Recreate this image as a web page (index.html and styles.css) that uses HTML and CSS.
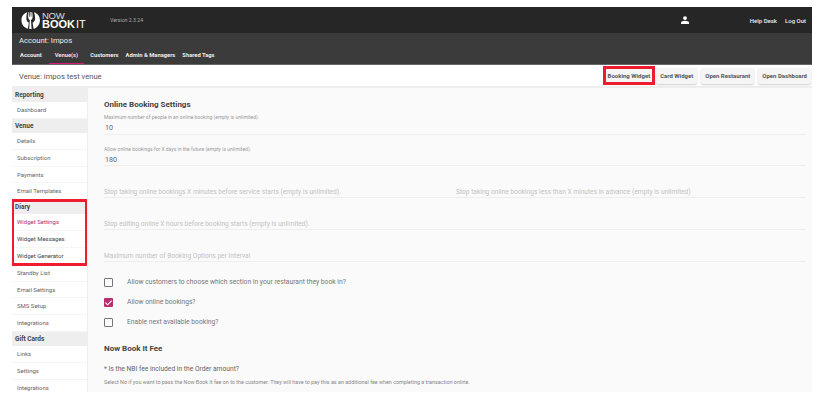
FILE: index.html
```html
<!DOCTYPE html>
<html lang="en">
<head>
<meta charset="utf-8">
<title>Now Book It</title>
<link rel="stylesheet" href="styles.css">
</head>
<body>
<div class="app">
  <header class="topbar">
    <div class="logo">
      <svg class="logo-mark" viewBox="0 0 26 24" width="20" height="19">
        <path fill="#fff" d="M8 1.200C3.400 2.600.6 6.600.6 11.600c0 5.400 3.400 9.700 8.400 11L10.200 15C8.200 14 7 12.200 7 9.500 7 6.500 7.400 3.500 8 1.200Z"/>
        <path fill="#fff" d="M17 1.200c.8 2.400 1.300 5.300 1.300 8.300 0 2.700-1.200 4.500-3.200 5.500l1.200 7.800c4.900-1.300 8.300-5.700 8.300-11.200C24.600 6.600 21.600 2.600 17 1.200Z"/>
        <path fill="#fff" d="M9.600 1h.9l.2 6h.7l.2-6.200h.9l.2 6.200h.7l.2-6h.9c.5 2.400.7 4.600.6 6.600-.1 2-1 3.400-2.100 4l.8 11.300h-3.100l.7-11.300c-1.100-.6-2-2-2.100-4-.1-2 .1-4.200.5-6.600Z"/>
      </svg>
      <div class="logo-text"><span class="logo-now">NOW</span><span class="logo-book">BOOK<span class="logo-it">IT</span></span></div>
    </div>
    <span class="version">Version 2.3.24</span>
    <svg class="user-icon" viewBox="0 0 10 10" width="8" height="8">
      <circle cx="5" cy="2.600" r="2.400" fill="#fff"/>
      <path fill="#fff" d="M0 10V8.200C0 6.700 2.500 5.800 5 5.800s5 .9 5 2.400V10Z"/>
    </svg>
    <a class="top-link">Help Desk</a>
    <a class="top-link">Log Out</a>
  </header>

  <section class="accountbar">
    <div class="account-name">Account: Impos</div>
    <nav class="tabs">
      <a class="tab">Account</a>
      <a class="tab tab-active">Venue(s)</a>
      <a class="tab">Customers</a>
      <a class="tab">Admin &amp; Managers</a>
      <a class="tab">Shared Tags</a>
    </nav>
  </section>

  <section class="venuebar">
    <div class="venue-name">Venue: impos test venue</div>
    <div class="venue-actions">
      <button class="btn btn-marked">Booking Widget</button>
      <button class="btn">Card Widget</button>
      <button class="btn">Open Restaurant</button>
      <button class="btn">Open Dashboard</button>
    </div>
  </section>

  <div class="main">
    <aside class="sidebar">
      <div class="side-head">Reporting</div>
      <a class="side-item">Dashboard</a>
      <div class="side-head">Venue</div>
      <a class="side-item">Details</a>
      <a class="side-item">Subscription</a>
      <a class="side-item">Payments</a>
      <a class="side-item">Email Templates</a>
      <div class="side-marked">
        <div class="side-head">Diary</div>
        <a class="side-item side-active">Widget Settings</a>
        <a class="side-item side-dark">Widget Messages</a>
        <a class="side-item side-dark">Widget Generator</a>
      </div>
      <a class="side-item">Standby List</a>
      <a class="side-item">Email Settings</a>
      <a class="side-item">SMS Setup</a>
      <a class="side-item">Integrations</a>
      <div class="side-head">Gift Cards</div>
      <a class="side-item">Links</a>
      <a class="side-item">Settings</a>
      <a class="side-item">Integrations</a>
    </aside>

    <main class="content">
      <h2 class="title">Online Booking Settings</h2>
      <div class="field field-filled">
        <label class="field-label">Maximum number of people in an online booking (empty is unlimited).</label>
        <div class="field-value">10</div>
      </div>
      <div class="field field-filled field-second">
        <label class="field-label">Allow online bookings for X days in the future (empty is unlimited).</label>
        <div class="field-value">180</div>
      </div>
      <div class="field-row">
        <div class="field field-empty"><div class="placeholder">Stop taking online bookings X minutes before service starts (empty is unlimited).</div></div>
        <div class="field field-empty"><div class="placeholder">Stop taking online bookings less than X minutes in advance (empty is unlimited)</div></div>
      </div>
      <div class="field field-empty"><div class="placeholder">Stop editing online X hours before booking starts (empty is unlimited).</div></div>
      <div class="field field-empty"><div class="placeholder">Maximum number of Booking Options per Interval</div></div>

      <div class="checks">
        <div class="check"><span class="box"></span><span>Allow customers to choose which section in your restaurant they book in?</span></div>
        <div class="check"><span class="box box-on"><svg viewBox="0 0 10 10" width="9" height="9"><path d="M1.500 5.200 4 7.500 8.500 2.800" fill="none" stroke="#fff" stroke-width="1.200"/></svg></span><span>Allow online bookings?</span></div>
        <div class="check"><span class="box"></span><span>Enable next available booking?</span></div>
      </div>

      <h2 class="title title-fee">Now Book It Fee</h2>
      <div class="question">* Is the NBI fee included in the Order amount?</div>
      <div class="hint">Select No if you want to pass the Now Book It fee on to the customer. They will have to pay this as an additional fee when completing a transaction online.</div>
    </main>
  </div>
</div>
</body>
</html>
```

FILE: styles.css
```css
* { box-sizing: border-box; }
html, body { margin: 0; height: 100%; background: #fff; overflow: hidden; }
body { padding: 7px 9px 0 12px; font-family: Roboto, "Liberation Sans", sans-serif; color: #555; }
button { font-family: inherit; }

.app { width: 800px; height: 385px; display: flex; flex-direction: column; overflow: hidden; background: #fafafa; }

.topbar { height: 26px; flex: none; background: #262626; display: flex; align-items: center; color: #fff; padding-right: 6px; }
.logo { display: flex; align-items: center; margin-left: 9px; width: 89px; flex: none; }
.logo-mark { flex: none; margin-right: 1px; }
.logo-text { display: flex; flex-direction: column; font-family: "Liberation Sans", sans-serif; color: #fff; line-height: 9px; }
.logo-now { font-size: 9.500px; letter-spacing: -.3px; color: #ddd; }
.logo-book { font-size: 11px; font-weight: 700; letter-spacing: 0; }
.logo-it { font-weight: 400; margin-left: 1px; }
.version { font-size: 5.200px; color: #aaa; }
.user-icon { margin-left: auto; margin-right: 61px; }
.top-link { font-size: 6px; font-weight: 500; color: #eee; margin-left: 8px; }
.user-icon + .top-link { margin-left: 0; }

.accountbar { height: 32px; flex: none; background: #3b3b3b; color: #fff; padding: 1px 0 0 7px; border-bottom: 1px solid #666; }
.account-name { font-size: 7.600px; line-height: 14px; color: #eee; }
.tabs { display: flex; }
.tab { font-size: 5.800px; font-weight: 700; line-height: 15px; height: 16px; color: #eee; margin-left: 1px; padding-right: 6px; }
.tab-active { color: #f3dbe8; border-bottom: 1px solid #d81b73; padding: 0 6px; margin: 0 5px 0 1px; }

.venuebar { height: 23px; flex: none; background: #fff; display: flex; align-items: flex-start; justify-content: space-between; padding: 1px 1px 0 7px; border-bottom: 2px solid #eee; }
.venue-name { font-size: 7.600px; line-height: 22px; color: #555; }
.venue-actions { display: flex; align-items: center; gap: 4px; height: 19px; }
.btn { height: 16px; padding: 0 4px; border: 0; border-radius: 2px; background: #f5f5f5; color: #555; font-size: 6px; font-weight: 700; box-shadow: 0 1px 2px rgba(0,0,0,.2); white-space: nowrap; }
.btn-marked { height: 19px; padding: 0 2px; background: #f5f5f5; box-shadow: none; border: 3px solid #ed1c2e; border-radius: 0; margin-right: -3px; }

.main { flex: 1; min-height: 0; display: flex; }
.sidebar { width: 76px; flex: none; background: #fff; border-right: 1px solid #eee; overflow: hidden; display: flex; flex-direction: column; }
.side-head { height: 14px; line-height: 14px; flex: none; background: #eee; padding-left: 3px; font-size: 6.500px; font-weight: 700; color: #444; }
.side-item { display: block; height: 16.850px; line-height: 15px; flex: none; padding-left: 5px; font-size: 6px; color: #666; border-bottom: 1px solid #f5f5f5; }
.sidebar > .side-item:last-child { border-bottom: 0; }
.side-marked { flex: none; outline: 3px solid #ed1c2e; outline-offset: -2px; background: #fff; }
.side-active { color: #b0306f; }
.side-dark { color: #444; }

.content { flex: 1; min-width: 0; padding: 11px 6px 0 16px; }
.title { margin: 0; font-size: 8px; font-weight: 700; line-height: 12px; color: #444; }
.field { border-bottom: 1px solid #eee; }
.field-filled { height: 21px; margin-top: 3px; }
.field-second { height: 31px; margin-top: 0; padding-top: 11px; }
.field-label { display: block; font-size: 5px; line-height: 7px; color: #9a9a9a; }
.field-value { font-size: 7.200px; line-height: 12px; color: #666; margin: 1px 0 0 1px; }
.field-row { display: grid; grid-template-columns: 352px 1fr; }
.field-empty { height: 32px; padding-top: 21px; }
.placeholder { font-size: 6.630px; line-height: 10px; color: #c2c2c2; white-space: nowrap; }

.checks { padding-top: 15px; display: flex; flex-direction: column; gap: 10px; }
.check { display: flex; align-items: center; height: 10px; font-size: 6.730px; color: #777; gap: 14px; }
.box { width: 9px; height: 9px; flex: none; border: 1px solid #777; border-radius: 1px; background: #fff; display: flex; }
.box-on { border: 0; background: #b8306f; }

.title-fee { margin-top: 16px; }
.question { font-size: 6.700px; line-height: 10px; color: #666; margin-top: 9px; }
.hint { font-size: 5.390px; line-height: 8px; color: #888; margin-top: 4px; white-space: nowrap; }
```
